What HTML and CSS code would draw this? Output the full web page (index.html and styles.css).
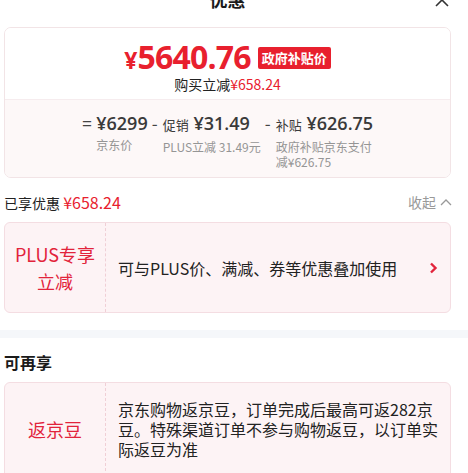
FILE: index.html
```html
<!DOCTYPE html>
<html lang="zh-CN">
<head>
<meta charset="utf-8">
<link rel="stylesheet" href="styles.css">
</head>
<body>
<div class="page">
  <div class="header">
    <div class="title">优惠</div>
    <svg class="close" width="16" height="16" viewBox="0 0 16 16"><path d="M2 2L14 14M14 2L2 14" stroke="#333" stroke-width="1.6" fill="none"/></svg>
  </div>

  <div class="price-card">
    <div class="price-top">
      <div class="price-row">
        <span class="price"><span class="yen">¥</span>5640.76</span>
        <span class="badge">政府补贴价</span>
      </div>
      <div class="price-sub">购买立减<span class="red">¥658.24</span></div>
    </div>
    <div class="price-bottom">
      <div class="calc">
        <div class="op op-eq">=</div>
        <div class="col">
          <div class="val">¥6299</div>
          <div class="lbl">京东价</div>
        </div>
      </div>
      <div class="calc">
        <div class="op">-</div>
        <div class="col">
          <div class="val"><span class="small">促销</span> ¥31.49</div>
          <div class="lbl">PLUS立减 31.49元</div>
        </div>
      </div>
      <div class="calc">
        <div class="op">-</div>
        <div class="col narrow">
          <div class="val"><span class="small">补贴</span> ¥626.75</div>
          <div class="lbl">政府补贴京东支付减¥626.75</div>
        </div>
      </div>
    </div>
  </div>

  <div class="enjoyed">
    <div class="enjoyed-left">已享优惠 <span class="red big">¥658.24</span></div>
    <div class="collapse">收起 <svg width="12" height="8" viewBox="0 0 12 8"><path d="M1 7L6 2L11 7" stroke="#999" stroke-width="1.3" fill="none"/></svg></div>
  </div>

  <div class="promo">
    <div class="promo-left">PLUS专享<br>立减</div>
    <div class="promo-right">可与PLUS价、满减、券等优惠叠加使用</div>
    <svg class="arrow" width="9" height="12" viewBox="0 0 9 12"><path d="M2 1.5L6.5 6L2 10.5" stroke="#e2233b" stroke-width="2.4" fill="none"/></svg>
  </div>

  <div class="band"></div>

  <div class="section-title">可再享</div>

  <div class="promo promo-bean">
    <div class="promo-left">返京豆</div>
    <div class="promo-right">京东购物返京豆，订单完成后最高可返282京豆。特殊渠道订单不参与购物返豆，以订单实际返豆为准</div>
  </div>
</div>
</body>
</html>
```

FILE: styles.css
```css
* { box-sizing: border-box; }
html, body { margin: 0; padding: 0; background: #fff; }
body {
  font-family: "Noto Sans CJK SC", "Noto Sans", sans-serif;
  color: #1a1a1a;
  overflow: hidden;
}
.page {
  width: 468px;
  padding: 0 17px 0 4px;
}
.header {
  height: 27px;
  position: relative;
  display: flex;
  justify-content: center;
}
.title {
  font-size: 18px;
  font-weight: 700;
  line-height: 18px;
  margin-top: -10px;
}
.close {
  position: absolute;
  right: 1px;
  top: -8px;
}
.price-card {
  border: 1px solid #f2e4e6;
  border-radius: 7px;
  overflow: hidden;
}
.price-top {
  background: #fff;
  height: 71px;
  padding-top: 13px;
  display: flex;
  flex-direction: column;
  align-items: center;
}
.price-row {
  display: flex;
  align-items: center;
  height: 34px;
}
.price {
  font-family: "Open Sans", "Noto Sans", sans-serif;
  font-weight: 700;
  font-size: 32px;
  color: #e8202e;
  letter-spacing: -0.8px;
  line-height: 34px;
}
.yen { font-size: 23px; margin-right: 1px; }
.badge {
  background: #e8202e;
  color: #fff;
  font-size: 13px;
  font-weight: 700;
  line-height: 22px;
  padding: 0 4px;
  border-radius: 2px;
  margin-left: 7px;
}
.price-sub {
  font-size: 14px;
  line-height: 18px;
  color: #222;
}
.red { color: #e8202e; }
.price-bottom {
  background: #fdf8f8;
  border-top: 1px solid #f6ecee;
  height: 78px;
  padding-top: 12px;
  display: flex;
  justify-content: center;
  gap: 4px;
}
.calc { display: flex; }
.op {
  width: 11px;
  font-size: 17px;
  line-height: 22px;
  color: #444;
}
.op-eq { width: 14px; }
.col { display: flex; flex-direction: column; }
.col.narrow { width: 97px; }
.val {
  font-family: "Open Sans", "Noto Sans", sans-serif;
  font-size: 18px;
  font-weight: 600;
  color: #3a3a3a;
  line-height: 22px;
  white-space: nowrap;
}
.val .small {
  font-family: "Noto Sans CJK SC", sans-serif;
  font-size: 13px;
  font-weight: 400;
}
.lbl {
  font-size: 12px;
  line-height: 15px;
  color: #959595;
  margin-top: 3px;
}
.enjoyed {
  display: flex;
  justify-content: space-between;
  align-items: center;
  height: 44px;
  padding-top: 4px;
  font-size: 14px;
}
.enjoyed-left { color: #222; }
.big { font-size: 16px; }
.collapse {
  color: #999;
  font-size: 14px;
  display: flex;
  align-items: center;
  gap: 4px;
  margin-right: -1px;
}
.promo {
  display: flex;
  align-items: center;
  background: #fdf3f5;
  border: 1px solid #f4dde2;
  border-radius: 6px;
  height: 91px;
  position: relative;
}
.promo-left {
  width: 101px;
  align-self: stretch;
  display: flex;
  align-items: center;
  justify-content: center;
  text-align: center;
  font-size: 18px;
  line-height: 27px;
  color: #e2233b;
  border-right: 1px dashed #f0cfd6;
  flex-shrink: 0;
}
.promo-right {
  font-size: 16px;
  line-height: 20px;
  color: #222;
  padding-left: 12px;
  padding-right: 10px;
}
.arrow {
  position: absolute;
  right: 12px;
  top: 39px;
}
.band {
  height: 8px;
  background: #f5f7fa;
  margin: 17px -17px 0 -4px;
}
.section-title {
  font-size: 16px;
  font-weight: 700;
  line-height: 20px;
  padding-top: 14px;
  height: 44px;
}
.promo-bean {
  height: 110px;
  align-items: flex-start;
}
.promo-bean .promo-left {
  align-items: flex-start;
  padding-top: 33px;
}
.promo-bean .promo-right {
  padding-top: 16px;
}
```
